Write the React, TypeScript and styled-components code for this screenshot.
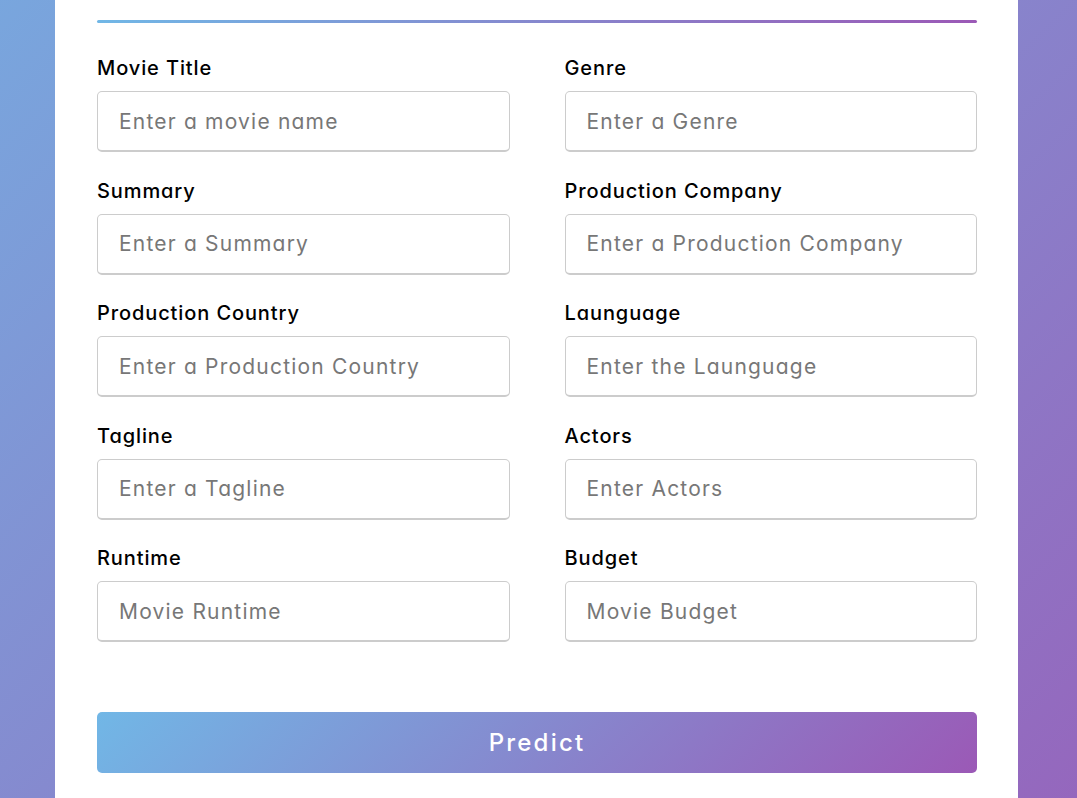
import React from "react";
import styled, { createGlobalStyle } from "styled-components";

const GlobalStyle = createGlobalStyle`
  html, body { margin: 0; padding: 0; }
  body {
    font-family: Inter, "Noto Sans", sans-serif;
    font-feature-settings: "cv11";
    background: linear-gradient(135deg, #71b7e6 -27%, #9b59b6 122%) fixed;
    min-height: 100vh;
  }
  * { box-sizing: border-box; }
`;

const Page = styled.div`
  display: flex;
  padding-left: 55px;
`;

const Card = styled.div`
  width: 963px;
  background: #fff;
  padding: 20px 41px 60px 42px;
`;

const Rule = styled.div`
  height: 3px;
  border-radius: 2px;
  background: linear-gradient(90deg, #71b7e6, #9b59b6);
`;

const Grid = styled.div`
  display: grid;
  grid-template-columns: 1fr 1fr;
  column-gap: 55px;
  row-gap: 26.5px;
  margin-top: 33px;
`;

const Field = styled.div`
  display: flex;
  flex-direction: column;
`;

const Label = styled.label`
  display: block;
  font-size: 20px;
  font-weight: 500;
  letter-spacing: 0.9px;
  line-height: 25px;
  color: #000;
  margin-bottom: 10px;
`;

const Input = styled.input`
  height: 61px;
  width: 100%;
  border: 1px solid #ccc;
  border-bottom-width: 2px;
  border-radius: 5px;
  padding: 0 21px;
  font-family: inherit;
  font-feature-settings: "cv11";
  font-size: 21px;
  letter-spacing: 1.2px;
  outline: none;
  color: #333;
  &::placeholder { color: #777; }
`;

const Button = styled.button`
  display: block;
  width: 100%;
  height: 61px;
  margin-top: 70px;
  border: none;
  border-radius: 5px;
  background: linear-gradient(135deg, #71b7e6, #9b59b6);
  color: #fff;
  font-family: inherit;
  font-feature-settings: "cv11";
  font-size: 24px;
  font-weight: 500;
  letter-spacing: 2.2px;
  cursor: pointer;
`;

const fields: [string, string][] = [
  ["Movie Title", "Enter a movie name"],
  ["Genre", "Enter a Genre"],
  ["Summary", "Enter a Summary"],
  ["Production Company", "Enter a Production Company"],
  ["Production Country", "Enter a Production Country"],
  ["Launguage", "Enter the Launguage"],
  ["Tagline", "Enter a Tagline"],
  ["Actors", "Enter Actors"],
  ["Runtime", "Movie Runtime"],
  ["Budget", "Movie Budget"],
];

export default function App() {
  return (
    <>
      <GlobalStyle />
      <Page>
        <Card>
          <Rule />
          <Grid>
            {fields.map(([l, p]) => (
              <Field key={l}>
                <Label>{l}</Label>
                <Input type="text" placeholder={p} />
              </Field>
            ))}
          </Grid>
          <Button>Predict</Button>
        </Card>
      </Page>
    </>
  );
}
